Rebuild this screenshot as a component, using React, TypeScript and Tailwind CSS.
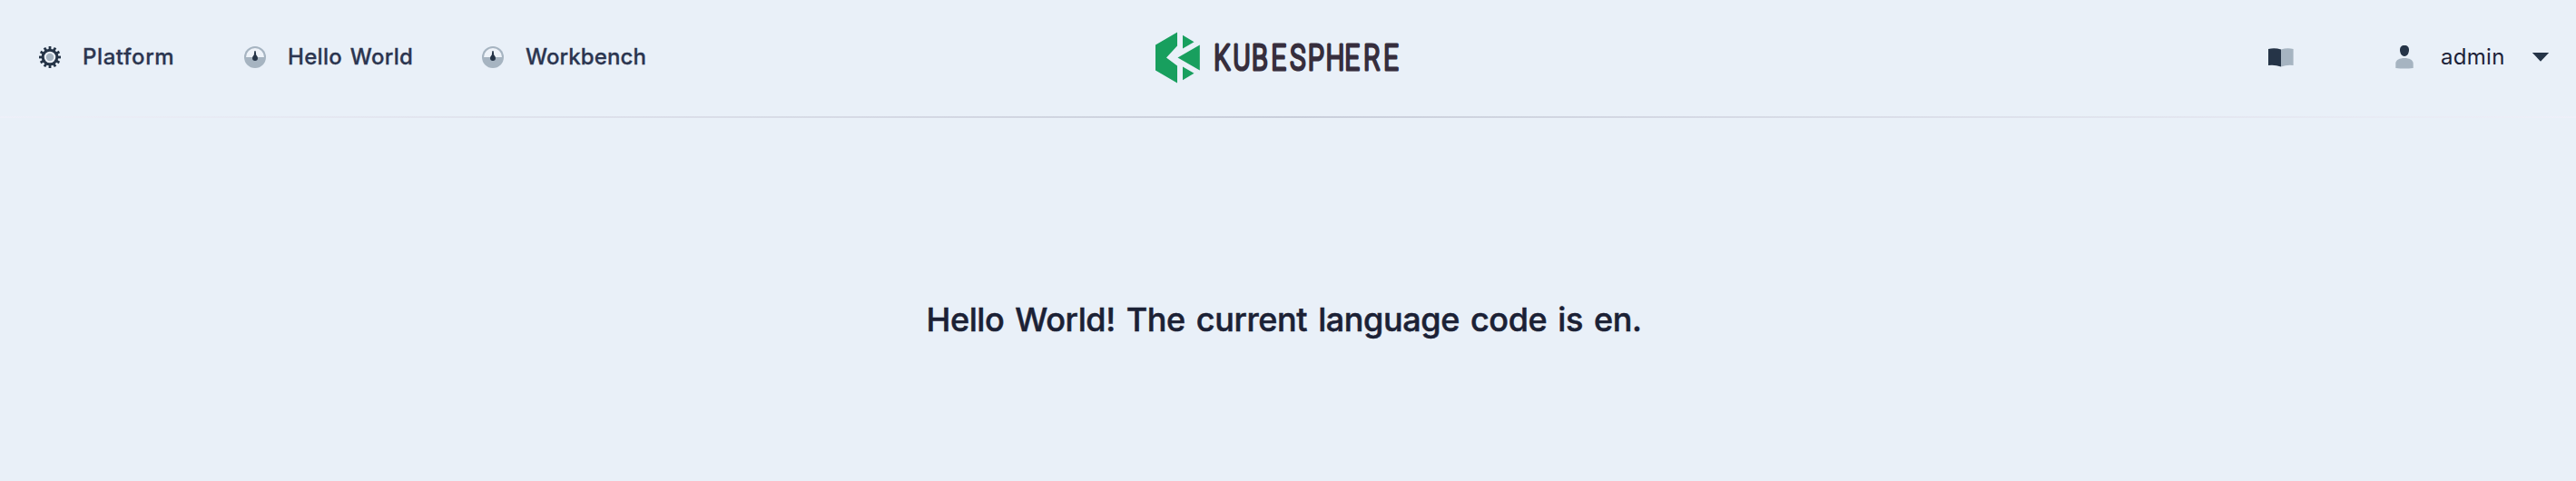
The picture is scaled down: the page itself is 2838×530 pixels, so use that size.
import React from "react";

function GearIcon() {
  const teeth = Array.from({ length: 12 }, (_, i) => i * 30);
  return (
    <svg className="size-[30px] shrink-0" viewBox="0 0 30 30">
      <g fill="#253447">
        {teeth.map((angle) => (
          <rect key={angle} x="13.6" y="3" width="2.8" height="4.5" transform={`rotate(${angle} 15 15)`} />
        ))}
      </g>
      <circle cx="15" cy="15" r="7.800" fill="#edf2f8" stroke="#253447" strokeWidth="3" />
      <circle cx="15" cy="15" r="4.2" fill="#a6b4c1" />
    </svg>
  );
}

function DashboardIcon() {
  return (
    <svg className="size-[30px] shrink-0" viewBox="0 0 30 30">
      <circle cx="15" cy="15" r="12" fill="#a6b4c1" />
      <path d="M5 15a10 10 0 0 1 20 0z" fill="#eef3f9" />
      <path d="M14.8 8h.4q.5 0 .6.9l.4 3.7q1.8 1.8 1.8 3.4a3 3 0 0 1-6 0q0-1.6 1.8-3.4l.4-3.7q.1-.9.6-.9z" fill="#253447" />
    </svg>
  );
}

function BookIcon() {
  return (
    <svg className="h-[22px] w-[30px]" viewBox="0 0 30 22">
      <path d="M1 2Q8 .2 15 2.5V21.500Q8 19 1 20z" fill="#253447" />
      <path d="M15 2.500Q22 .2 28.600 2V20Q22 19 15 21.500z" fill="#a6b4c1" />
    </svg>
  );
}

function UserIcon() {
  return (
    <svg className="h-[28px] w-[22px]" viewBox="0 0 22 28">
      <path d="M11 1c3.500 0 5 2 5 5s-1.500 7-5 7-5-4-5-7 1.500-5 5-5z" fill="#253447" />
      <path d="M1.300 26V21c0-4 4.500-6 9.700-6s9.700 2 9.700 6v5q-9.700 1.200-19.400 0z" fill="#a6b4c1" />
    </svg>
  );
}

function Logo() {
  return (
    <svg className="h-[60px] w-[275px] overflow-visible" viewBox="0 0 275 60">
      <g fill="#189f5e">
        <path d="M3 16.500 27 2.500V17.500L15 30.500 27 39.500V58.500L3 44.500z" />
        <path d="M33 5.800 45.500 13.300 33 20.500z" />
        <path d="M51.800 16.500V44.500L27.500 30.500z" />
        <path d="M33 40.500 45.500 47.700 33 55.200z" />
      </g>
      <text
        x="88.5 116.6 143.3 171.8 198.9 224.9 251 278.3 305.6 334.5"
        y="44"
        transform="scale(.76 1)"
        className="fill-[#362e3d] stroke-[#362e3d] stroke-[3.2px] font-['Roboto',sans-serif] text-[38px] font-light"
        strokeLinejoin="round"
      >
        KUBESPHERE
      </text>
    </svg>
  );
}

export default function App() {
  return (
    <div className="h-[530px] w-[2838px] overflow-hidden bg-[#e9f0f8] font-['Inter',sans-serif]">
      <header className="mb-0.5 grid h-[126px] grid-cols-[1270px_275px_1fr] items-center text-2xl text-[#2b3550]">
        <nav className="flex h-[60px] items-center font-medium [-webkit-text-stroke:0.3px]">
          <a className="ml-10 flex w-[226px] items-center gap-[21px] tracking-[0.6px] whitespace-nowrap">
            <GearIcon />
            Platform
          </a>
          <a className="flex w-[262px] items-center gap-[21px] tracking-[0.3px] [word-spacing:2px] whitespace-nowrap">
            <DashboardIcon />
            Hello World
          </a>
          <a className="flex items-center gap-[21px] tracking-[0.1px] whitespace-nowrap">
            <DashboardIcon />
            Workbench
          </a>
        </nav>
        <Logo />
        <div className="flex items-center justify-end pr-[29px] text-[#1c2238]">
          <BookIcon />
          <span className="ml-[110px] flex">
            <UserIcon />
          </span>
          <span className="ml-[29px] w-[100px] tracking-[0.3px]">admin</span>
          <svg className="h-[10px] w-[20px]" viewBox="0 0 20 10">
            <path d="M.8 0H19.200L10 9.800z" fill="#253447" />
          </svg>
        </div>
      </header>
      <div className="h-0.5 bg-linear-to-r from-[#eef0f9] via-[#cacfdb] to-[#eef0f9]" />
      <main className="flex justify-center pt-[200px] pr-[9px]">
        <h1 className="text-4xl leading-[44px] font-medium tracking-[-0.4px] [word-spacing:2.8px] whitespace-nowrap text-[#1b2135] [-webkit-text-stroke:0.5px]">
          Hello World! The current language code is en.
        </h1>
      </main>
    </div>
  );
}
